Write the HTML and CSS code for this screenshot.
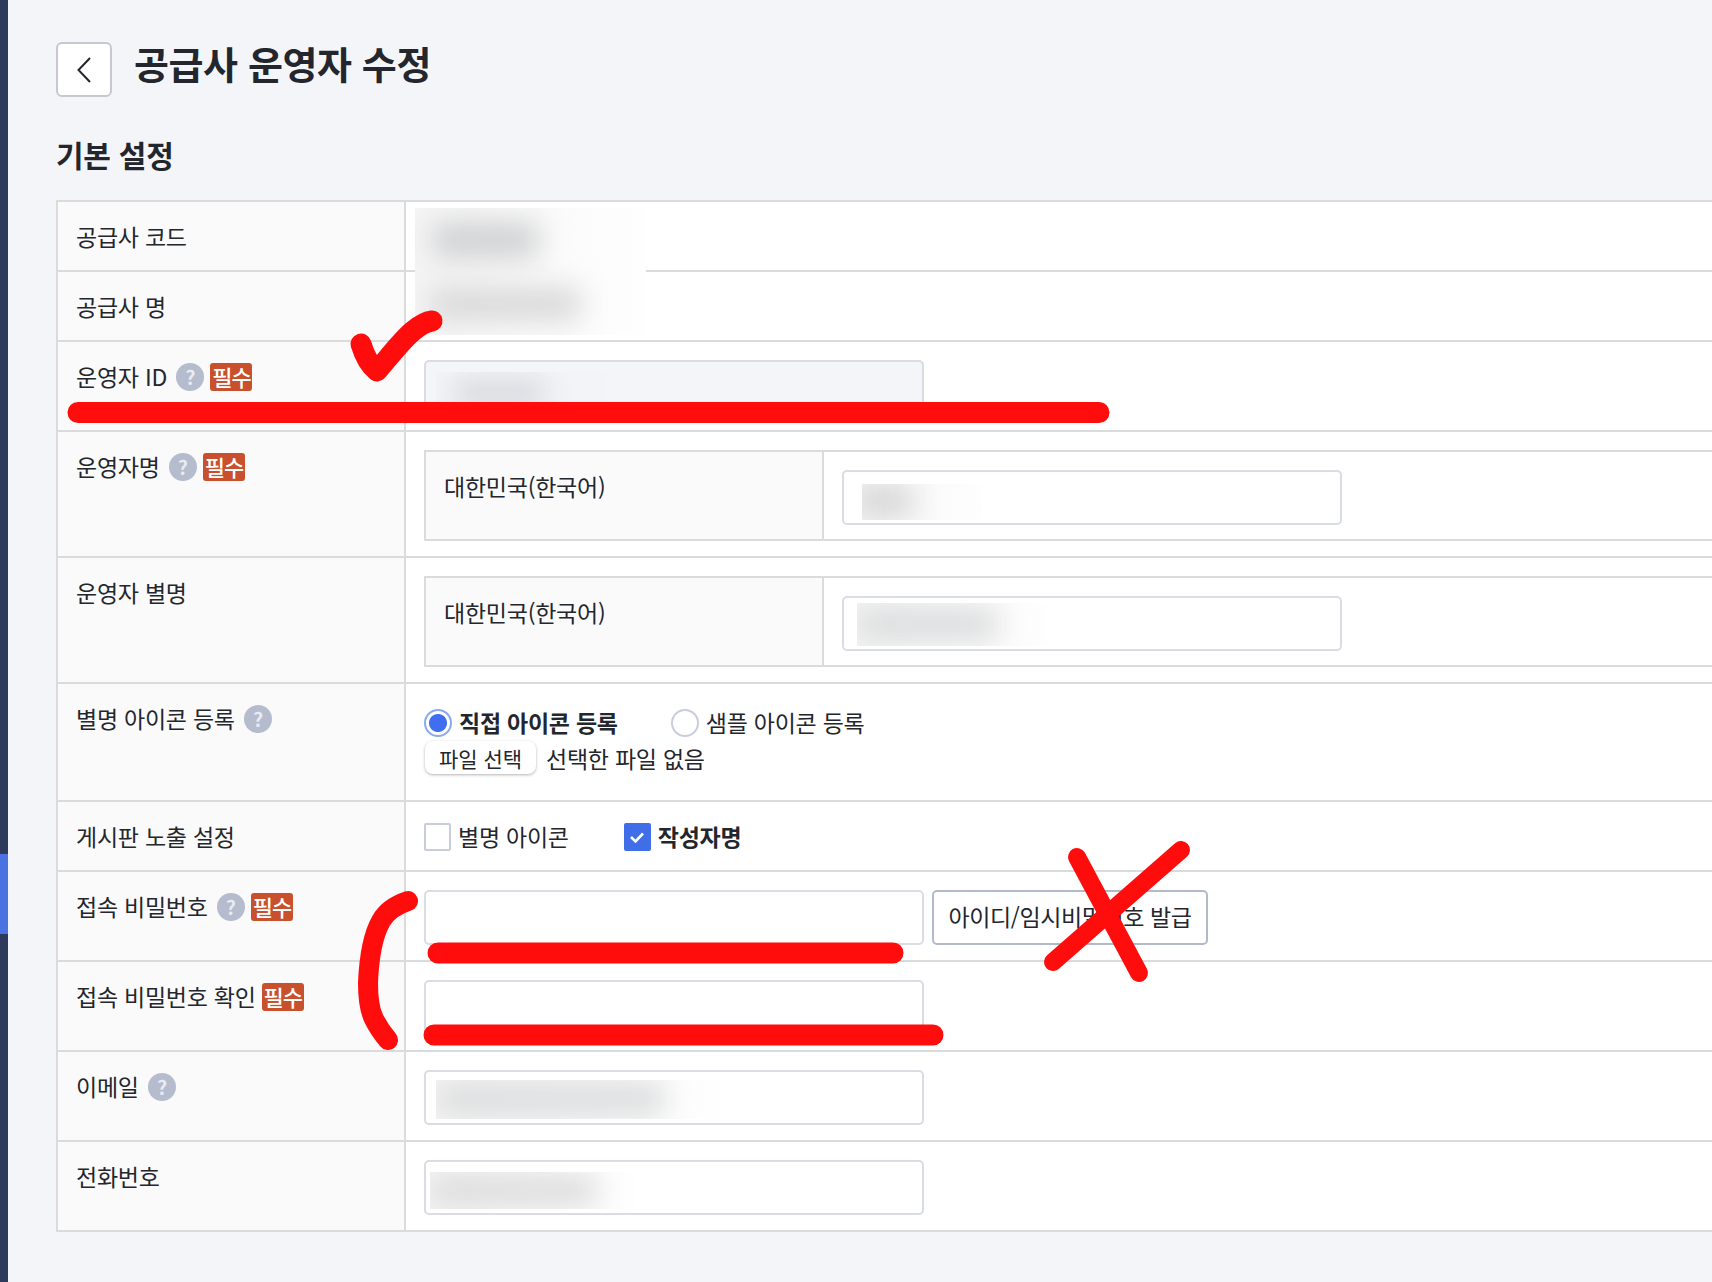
FILE: index.html
```html
<!DOCTYPE html>
<html lang="ko">
<head>
  <meta charset="UTF-8">
  <meta name="viewport" content="width=device-width, initial-scale=1.0">
  <title>공급사 운영자 수정</title>
  <link rel="stylesheet" href="styles.css">
</head>
<body>
  <aside class="sidebar"><div class="sidebar-active"></div></aside>
  <main class="content">
    <header class="page-head">
      <button class="back-btn" type="button" aria-label="뒤로">
        <svg width="16" height="28" viewBox="0 0 16 28"><path d="M14 2 2.500 14 14 26" fill="none" stroke="#23262d" stroke-width="2"/></svg>
      </button>
      <h1>공급사 운영자 수정</h1>
    </header>
    <h2 class="section-title">기본 설정</h2>

    <table class="form-table">
      <tr>
        <th>공급사 코드</th>
        <td class="cell-blur">
          <div class="redact redact-supplier">
            <div class="blob blob-code"></div>
            <div class="blob blob-name"></div>
          </div>
        </td>
      </tr>
      <tr>
        <th>공급사 명</th>
        <td></td>
      </tr>
      <tr>
        <th>운영자 ID <span class="help">?</span> <span class="req">필수</span></th>
        <td>
          <div class="field">
            <input class="text-input is-disabled" type="text" disabled>
            <div class="redact redact-id"><div class="blob blob-id"></div></div>
          </div>
        </td>
      </tr>
      <tr>
        <th>운영자명 <span class="help">?</span> <span class="req">필수</span></th>
        <td>
          <div class="locale-box">
            <div class="locale-name">대한민국(한국어)</div>
            <div class="locale-value">
              <div class="field">
                <input class="text-input" type="text">
                <div class="redact redact-oper"><div class="blob blob-oper"></div></div>
              </div>
            </div>
          </div>
        </td>
      </tr>
      <tr>
        <th>운영자 별명</th>
        <td>
          <div class="locale-box">
            <div class="locale-name">대한민국(한국어)</div>
            <div class="locale-value">
              <div class="field">
                <input class="text-input" type="text">
                <div class="redact redact-nick"><div class="blob blob-nick"></div></div>
              </div>
            </div>
          </div>
        </td>
      </tr>
      <tr>
        <th>별명 아이콘 등록 <span class="help">?</span></th>
        <td>
          <div class="radio-row">
            <label class="choice choice-first"><span class="radio is-on"></span><b>직접 아이콘 등록</b></label>
            <label class="choice"><span class="radio"></span>샘플 아이콘 등록</label>
          </div>
          <div class="file-row">
            <button class="file-btn" type="button">파일 선택</button>
            <span>선택한 파일 없음</span>
          </div>
        </td>
      </tr>
      <tr>
        <th>게시판 노출 설정</th>
        <td>
          <div class="check-row">
            <label class="choice choice-check"><span class="check"></span>별명 아이콘</label>
            <label class="choice">
              <span class="check is-on">
                <svg width="18" height="14" viewBox="0 0 18 14"><path d="M3 7l4.500 4.500L15 3.500" fill="none" stroke="#fff" stroke-width="2.600"/></svg>
              </span>
              <b>작성자명</b>
            </label>
          </div>
        </td>
      </tr>
      <tr>
        <th>접속 비밀번호 <span class="help">?</span> <span class="req">필수</span></th>
        <td>
          <div class="field-row">
            <input class="text-input" type="password">
            <button class="issue-btn" type="button">아이디/임시비밀번호 발급</button>
          </div>
        </td>
      </tr>
      <tr>
        <th>접속 비밀번호 확인 <span class="req">필수</span></th>
        <td><input class="text-input" type="password"></td>
      </tr>
      <tr>
        <th>이메일 <span class="help">?</span></th>
        <td>
          <div class="field">
            <input class="text-input" type="text">
            <div class="redact redact-mail"><div class="blob blob-mail"></div></div>
          </div>
        </td>
      </tr>
      <tr>
        <th>전화번호</th>
        <td>
          <div class="field">
            <input class="text-input" type="text">
            <div class="redact redact-tel"><div class="blob blob-tel"></div></div>
          </div>
        </td>
      </tr>
    </table>
  </main>

  <!-- 빨간 펜 표시 -->
  <svg class="pen-marks" width="1712" height="1282" viewBox="0 0 1712 1282">
    <g fill="none" stroke="#ff0d0d" stroke-linecap="round" stroke-linejoin="round">
      <path d="M78 412.500H1099" stroke-width="21"/>
      <path d="M438 953H893" stroke-width="21"/>
      <path d="M434 1035H933" stroke-width="21"/>
      <path d="M361 344c3 10 7 20 16 27 12-14 26-32 36-40 6-5 12-9 19-10" stroke-width="21"/>
      <path d="M408 901c-12 4-22 11-27 20-8 14-12 38-13 62 0 14 1 26 6 36 4 8 9 15 14 21" stroke-width="20"/>
      <path d="M1077 857 1139 973" stroke-width="18"/>
      <path d="M1181 850 1053 962" stroke-width="18"/>
    </g>
  </svg>
</body>
</html>
```

FILE: styles.css
```css
* {
  box-sizing: border-box;
}
html, body {
  margin: 0;
  padding: 0;
  height: 1282px;
  overflow: hidden;
}
body {
  position: relative;
  display: flex;
  font-family: 'Noto Sans CJK KR', 'Noto Sans', sans-serif;
  background-color: #F3F5F9;
  color: #23262D;
  font-size: 23px;
  letter-spacing: -0.25px;
}
.sidebar {
  width: 8px;
  flex-shrink: 0;
  background: #2D3A5C;
  padding-top: 854px;
}
.sidebar-active {
  height: 80px;
  background: #4A72E0;
}
.content {
  flex: 1;
  min-width: 0;
  padding: 42px 0 0 48px;
}
.page-head {
  display: flex;
  align-items: center;
  gap: 22px;
  height: 55px;
}
.back-btn {
  width: 56px;
  height: 55px;
  display: flex;
  align-items: center;
  justify-content: center;
  padding: 0;
  background: #fff;
  border: 2px solid #C6C9CF;
  border-radius: 6px;
}
.page-head h1 {
  margin: 0 0 14px 0;
  font-size: 38px;
  font-weight: 700;
  letter-spacing: -0.4px;
  line-height: 50px;
}
.section-title {
  margin: 36px 0 25px 0;
  font-size: 30px;
  font-weight: 700;
  line-height: 42px;
  color: #23262D;
}

/* form table */
.form-table {
  width: 100%;
  border-collapse: separate;
  border-spacing: 0;
  border-top: 2px solid #DADBDD;
  border-left: 2px solid #DADBDD;
  background: #fff;
}
.form-table th,
.form-table td {
  border-bottom: 2px solid #DADBDD;
  vertical-align: top;
  text-align: left;
  font-weight: 400;
}
.form-table th {
  width: 348px;
  padding: 18px 0 18px 18px;
  background: #FAFAFA;
  border-right: 2px solid #DADBDD;
  line-height: 32px;
  white-space: nowrap;
}
.form-table td {
  padding: 18px 0 15px 18px;
  line-height: 32px;
}
.help {
  display: inline-block;
  width: 28px;
  height: 28px;
  margin: 0 0 0 3px;
  border-radius: 50%;
  background: #B4BCCD;
  color: #E8EBF1;
  font-size: 20px;
  font-weight: 700;
  line-height: 28px;
  text-align: center;
  vertical-align: 1px;
}
.req {
  display: inline-block;
  width: 42px;
  height: 28px;
  margin-left: 0;
  border-radius: 3px;
  background: #C8502D;
  color: #fff;
  font-size: 22px;
  font-weight: 500;
  letter-spacing: -1px;
  line-height: 27px;
  text-align: center;
  vertical-align: 0;
}

/* inputs */
.field {
  position: relative;
  width: 500px;
}
.field-row {
  display: flex;
  gap: 8px;
}
.text-input {
  display: block;
  width: 500px;
  height: 55px;
  background: #fff;
  border: 2px solid #D9DCE3;
  border-radius: 5px;
}
.text-input.is-disabled {
  background: #F3F5F9;
}
.issue-btn {
  width: 276px;
  height: 55px;
  padding: 0 0 4px 0;
  background: #fff;
  border: 2px solid #B2B9CB;
  border-radius: 5px;
  font-family: inherit;
  font-size: 23px;
  letter-spacing: -0.4px;
  color: #23262D;
}
.locale-box {
  display: flex;
  height: 91px;
  border: 2px solid #DADBDD;
  border-right: 0;
}
.locale-name {
  width: 398px;
  padding: 18px 0 0 18px;
  background: #FAFAFA;
  border-right: 2px solid #DADBDD;
}
.locale-value {
  flex: 1;
  padding: 18px 0 0 18px;
}

/* radio, check, file */
.choice {
  display: flex;
  align-items: center;
  gap: 7px;
}
.choice b {
  font-weight: 700;
}
.choice-first {
  margin-right: 53px;
}
.choice-check {
  margin-right: 55px;
}
.radio-row {
  display: flex;
  height: 39px;
  align-items: center;
}
.radio {
  width: 28px;
  height: 28px;
  margin-top: 2px;
  border-radius: 50%;
  background: #fff;
  border: 2px solid #C9CDDB;
}
.radio.is-on {
  border: 2px solid #8AA9F2;
  background: radial-gradient(circle, #3F6EF0 0, #3F6EF0 8.500px, #fff 9.500px);
}
.file-row {
  display: flex;
  align-items: center;
  gap: 10px;
  height: 33px;
  margin-bottom: 11px;
}
.file-btn {
  width: 111px;
  height: 33px;
  margin-left: 1px;
  padding: 0;
  background: #fff;
  border: 0;
  border-radius: 8px;
  box-shadow: 0 1px 3px rgba(0,0,0,0.30);
  font-family: inherit;
  font-size: 21px;
  color: #23262D;
}
.check-row {
  display: flex;
}
.check {
  width: 27px;
  height: 28px;
  margin-top: 2px;
  display: flex;
  align-items: center;
  justify-content: center;
  background: #fff;
  border: 2px solid #C9CDDB;
  border-radius: 2px;
}
.check.is-on {
  background: #3F6EE8;
  border-color: #3F6EE8;
}

/* blurred parts of the capture */
.cell-blur {
  position: relative;
}
.redact {
  position: absolute;
  overflow: hidden;
  z-index: 1;
  background: linear-gradient(90deg, #F5F5F5 0, #FBFBFB 65%, #FEFEFE 100%);
}
.blob {
  position: absolute;
  filter: blur(14px);
  background: #D0D1D3;
}
.redact-supplier {
  left: 9px;
  top: 6px;
  width: 231px;
  height: 127px;
}
.blob-code {
  left: 18px;
  top: 14px;
  width: 105px;
  height: 36px;
}
.blob-name {
  left: 15px;
  top: 80px;
  width: 150px;
  height: 32px;
  background: #D8D8D8;
}
.redact-id {
  left: 12px;
  top: 12px;
  width: 170px;
  height: 40px;
  background: #F3F4F8;
}
.blob-id {
  left: 18px;
  top: 8px;
  width: 90px;
  height: 28px;
  background: #D6D8DD;
}
.redact-oper {
  left: 20px;
  top: 14px;
  width: 120px;
  height: 36px;
}
.blob-oper {
  left: -6px;
  top: 2px;
  width: 56px;
  height: 30px;
  background: #D4D4D4;
}
.redact-nick {
  left: 15px;
  top: 7px;
  width: 190px;
  height: 43px;
}
.blob-nick {
  left: 0;
  top: 4px;
  width: 140px;
  height: 34px;
  background: #DCDDDE;
}
.redact-mail {
  left: 12px;
  top: 10px;
  width: 284px;
  height: 39px;
}
.blob-mail {
  left: 2px;
  top: 2px;
  width: 226px;
  height: 34px;
  background: #DCDDDE;
}
.redact-tel {
  left: 6px;
  top: 12px;
  width: 204px;
  height: 37px;
}
.blob-tel {
  left: 0;
  top: 3px;
  width: 166px;
  height: 31px;
  background: #DCDCDD;
}
.pen-marks {
  position: absolute;
  left: 0;
  top: 0;
  z-index: 2;
  pointer-events: none;
}
```
